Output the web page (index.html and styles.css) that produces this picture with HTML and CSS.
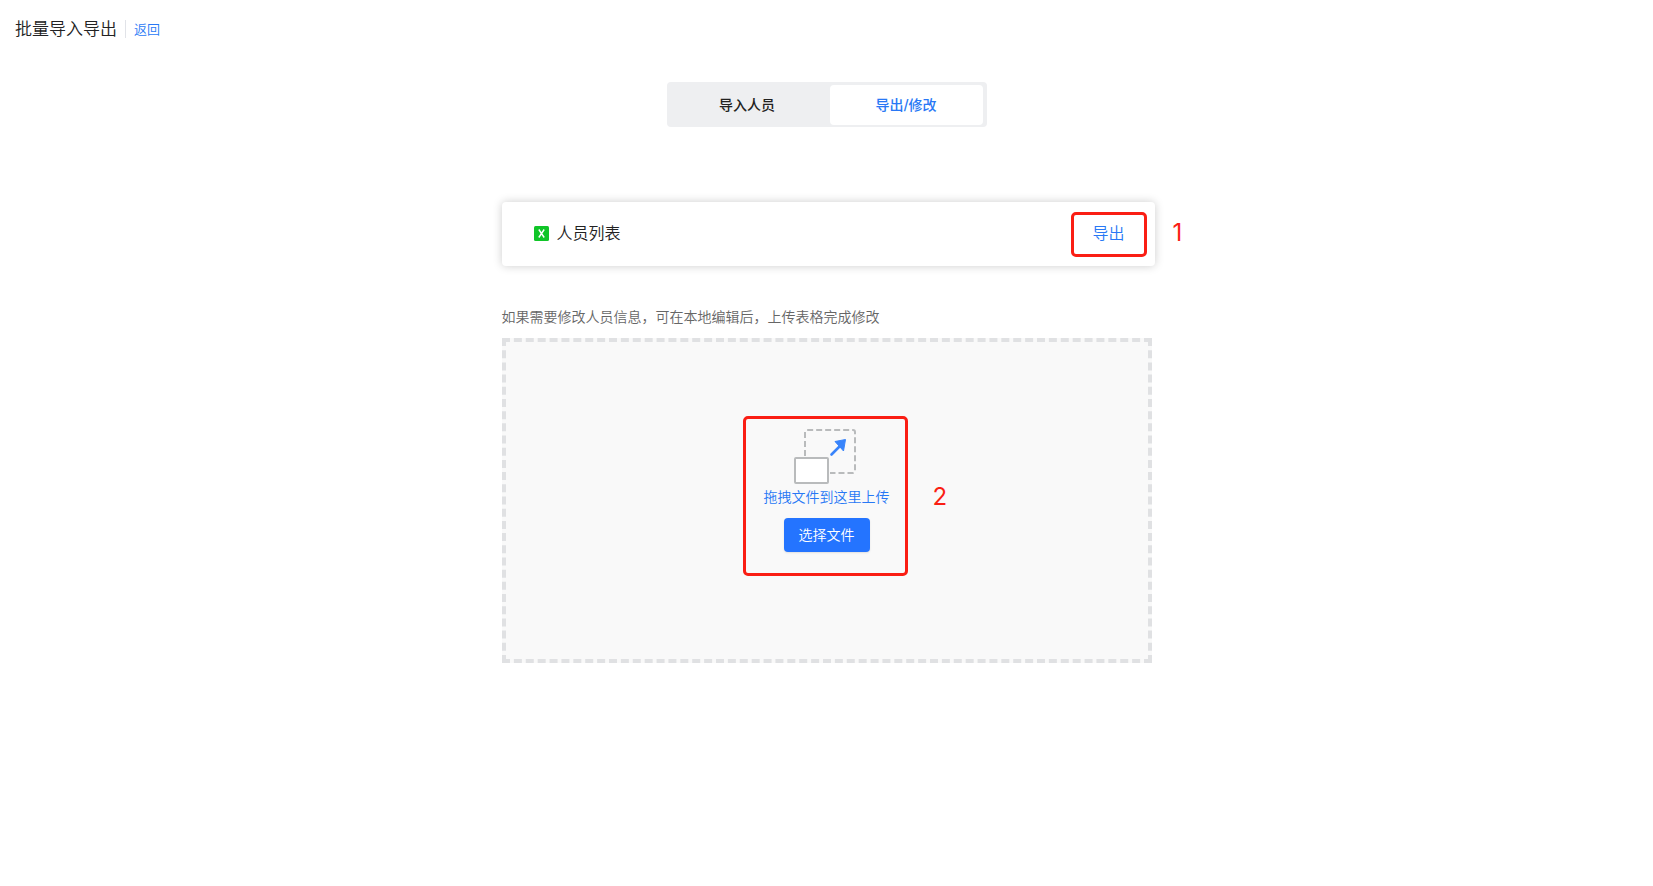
FILE: index.html
```html
<!DOCTYPE html>
<html lang="zh-CN">
<head>
    <meta charset="UTF-8">
    <title>批量导入导出</title>
    <link rel="stylesheet" href="styles.css">
</head>
<body>
    <header class="header">
        <h1 class="title">批量导入导出</h1>
        <a class="back" href="#">返回</a>
    </header>

    <main class="container">
        <div class="tabs">
            <button class="tab" type="button">导入人员</button>
            <button class="tab tab-active" type="button">导出/修改</button>
        </div>

        <div class="card">
            <svg class="file-icon" width="15" height="15" viewBox="0 0 15 15" aria-hidden="true">
                <rect width="15" height="15" rx="1.5" fill="#10c528"/>
                <path d="M4.8 3.5L10.2 11.5M10.2 3.5L4.8 11.5" stroke="#fff" stroke-width="1.4" fill="none"/>
            </svg>
            <span class="file-name">人员列表</span>
            <button class="export-btn" type="button">导出</button>
            <div class="mark mark-export"></div>
            <span class="step step-export">1</span>
        </div>

        <p class="hint">如果需要修改人员信息，可在本地编辑后，上传表格完成修改</p>

        <div class="drop-zone">
            <div class="upload">
                <svg class="upload-icon" width="66" height="56" viewBox="0 0 66 56" aria-hidden="true">
                    <path d="M11 28V4Q11 2 13 2H59Q61 2 61 4V43Q61 45 59 45H36" fill="none" stroke="#b9bbbc" stroke-width="2" stroke-dasharray="6 3"/>
                    <rect x="1" y="30" width="33" height="25" rx="1" fill="#fff" stroke="#b9bbbc" stroke-width="2"/>
                    <path d="M37.500 26.500L47 17" stroke="#3884fb" stroke-width="2.6" stroke-linecap="round"/>
                    <path d="M41 13.500L51.500 11.500L49.500 23Z" fill="#3884fb" stroke="#3884fb" stroke-linejoin="round"/>
                </svg>
                <span class="upload-text">拖拽文件到这里上传</span>
                <button class="choose-btn" type="button">选择文件</button>
                <div class="mark mark-upload"></div>
                <span class="step step-upload">2</span>
            </div>
        </div>
    </main>
</body>
</html>
```

FILE: styles.css
```css
body {
    margin: 0;
    background: #fff;
    color: #222;
    font-family: Inter, "Noto Sans CJK SC", sans-serif;
    font-weight: 350;
}
button {
    padding: 0;
    border: none;
    background: none;
    font-family: inherit;
    font-weight: inherit;
    cursor: pointer;
}
.header {
    display: flex;
    align-items: center;
    gap: 8px;
    height: 58px;
    padding-left: 15px;
}
.title {
    margin: 0;
    font-size: 17px;
    font-weight: inherit;
    line-height: 24px;
}
.back {
    padding-left: 8px;
    border-left: 1px solid #e1e3e8;
    color: #2878f5;
    font-size: 13px;
    line-height: 18px;
    text-decoration: none;
}
.container {
    max-width: 650px;
    margin: 0 auto;
    padding-top: 24px;
}

/* tabs */
.tabs {
    display: flex;
    gap: 6px;
    box-sizing: border-box;
    width: 320px;
    margin: 0 auto 75px;
    padding: 3px 4px 2px;
    border-radius: 4px;
    background: #eeeff1;
}
.tab {
    flex: 1;
    height: 40px;
    padding-bottom: 2px;
    border-radius: 4px;
    color: #222;
    font-size: 14px;
    font-weight: 500;
}
.tab-active {
    background: #fff;
    color: #2878f5;
}

/* export card */
.card {
    position: relative;
    display: flex;
    align-items: center;
    gap: 8px;
    height: 64px;
    margin-right: -3px;
    padding: 0 30px 2px 32px;
    border-radius: 4px;
    background: #fff;
    box-shadow: 0 0 10px rgba(0, 0, 0, 0.2);
    box-sizing: border-box;
}
.file-name {
    flex: 1;
    font-size: 16px;
    line-height: 24px;
}
.export-btn {
    color: #2878f5;
    font-size: 16px;
    line-height: 24px;
}

/* upload area */
.hint {
    margin: 40px 0 11px;
    color: #666;
    font-size: 14px;
    line-height: 21px;
}
.drop-zone {
    display: flex;
    justify-content: center;
    box-sizing: border-box;
    height: 325px;
    padding-top: 86px;
    border: 4px dashed #e0e1e3;
    background: #f9f9f9;
}
.upload {
    position: relative;
    display: flex;
    flex-direction: column;
    align-items: center;
    align-self: flex-start;
}
.upload-text {
    margin: 3px 0 11px;
    color: #2878f5;
    font-size: 14px;
    line-height: 20px;
}
.choose-btn {
    width: 86px;
    height: 34px;
    padding-bottom: 2px;
    border-radius: 4px;
    background: #2474ff;
    box-shadow: 0 1px 2px rgba(0, 0, 0, 0.1);
    color: #fff;
    font-size: 14px;
}

/* step marks laid over the controls */
.mark {
    position: absolute;
    box-sizing: border-box;
    border: 3px solid #fa1e14;
    border-radius: 5px;
    pointer-events: none;
}
.mark-export {
    top: 10px;
    right: 8px;
    width: 76px;
    height: 45px;
}
.mark-upload {
    top: -12px;
    left: -21px;
    width: 165px;
    height: 160px;
}
.step {
    position: absolute;
    color: #fa1e14;
    font-size: 24px;
    font-weight: 400;
    line-height: 30px;
}
.step-export {
    top: 16px;
    left: calc(100% + 18px);
}
.step-upload {
    top: 54px;
    left: calc(100% + 43px);
}
```
